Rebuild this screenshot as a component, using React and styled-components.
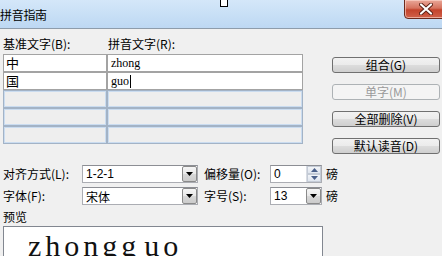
import React from "react";
import styled, { createGlobalStyle } from "styled-components";

const Global = createGlobalStyle`
  html, body { margin: 0; padding: 0; background: #f0f0f0; }
  * { box-sizing: border-box; }
`;

const CJK = `"Noto Sans CJK SC", "Noto Sans", sans-serif`;

const Window = styled.div`
  position: relative;
  width: 442px;
  height: 256px;
  overflow: hidden;
  background: #f0f0f0;
  font-family: ${CJK};
  font-size: 12px;
  color: #000;
`;

const TitleBar = styled.div`
  height: 29px;
  display: flex;
  align-items: flex-start;
  justify-content: space-between;
  background: linear-gradient(#d4e7f9, #bdd8f3);
  border-bottom: 1px solid #8e9cab;
`;

const Title = styled.div`
  line-height: 14px;
  padding-top: 8px;
  font-size: 12px;
  letter-spacing: -0.3px;
`;

const Grip = styled.div`
  position: absolute;
  left: 220px;
  top: -1px;
  width: 8px;
  height: 8px;
  background: #fff;
  border: 1px solid #000;
`;

const CloseBtn = styled.div`
  width: 43px;
  height: 20px;
  margin-right: -5px;
  margin-top: -1px;
  display: flex;
  align-items: center;
  justify-content: center;
  border: 1px solid #6b2a1e;
  border-radius: 0 0 4px 4px;
  background: linear-gradient(#e9a899 0%, #d6735f 45%, #c3432c 55%, #d0614a 100%);
  box-shadow: inset 0 0 0 1px rgba(255, 220, 210, 0.6);
`;

const Body = styled.div`
  padding-left: 3px;
`;

const Top = styled.div`
  display: flex;
  align-items: flex-start;
`;

const LeftCol = styled.div`
  width: 300px;
`;

const HeaderRow = styled.div`
  display: flex;
  padding-top: 8px;
  height: 25px;
  line-height: 14px;
`;

const ColLabel = styled.div`
  width: ${(p) => p.$w || "auto"};
  white-space: nowrap;
`;

const Grid = styled.div`
  display: grid;
  grid-template-columns: 104px 196px;
  grid-auto-rows: 18px;
`;

const Cell = styled.div`
  border: 1px solid ${(p) => (p.$empty ? "#a3b3c6" : "#a3a3a3")};
  background: ${(p) => (p.$empty ? "#eeeeee" : "#fff")};
  box-shadow: ${(p) => (p.$empty ? "inset 0 0 0 1px #cadcf0" : "none")};
  padding-left: ${(p) => (p.$latin ? "3px" : "2px")};
  display: flex;
  align-items: center;
  font-family: ${(p) => (p.$latin ? `"Liberation Serif", serif` : CJK)};
  font-size: ${(p) => (p.$latin ? "12px" : "13px")};
  line-height: 16px;
`;

const Caret = styled.span`
  display: inline-block;
  width: 1px;
  height: 13px;
  background: #000;
  margin-left: 1px;
`;

const Buttons = styled.div`
  margin-left: 29px;
  padding-top: 28px;
  display: flex;
  flex-direction: column;
  gap: 11px;
`;

const Button = styled.div`
  width: 108px;
  height: 16px;
  display: flex;
  align-items: center;
  justify-content: center;
  border: 1px solid ${(p) => (p.$disabled ? "#adb2b5" : "#707070")};
  border-radius: 3px;
  background: ${(p) =>
    p.$disabled
      ? "#f4f4f4"
      : "linear-gradient(#f2f2f2 0%, #ebebeb 50%, #dddddd 50%, #cfcfcf 100%)"};
  color: ${(p) => (p.$disabled ? "#9a9a9a" : "#000")};
  font-size: 12px;
  line-height: 14px;
  white-space: nowrap;
`;

const Form = styled.div`
  display: grid;
  grid-template-columns: 79px 116px 72px 52px auto;
  grid-auto-rows: 18px;
  row-gap: 4px;
  margin-top: 11px;
  align-items: center;
`;

const Label = styled.div`
  white-space: nowrap;
  line-height: 14px;
  padding-left: ${(p) => p.$pad || "0"};
`;

const Unit = styled.div`
  padding-left: 4px;
  line-height: 14px;
`;

const Field = styled.div`
  height: 18px;
  display: flex;
  align-items: stretch;
  justify-content: space-between;
  background: #fff;
  border: 1px solid #abadb3;
  border-top-color: #8c8e94;
`;

const FieldText = styled.span`
  padding-left: 3px;
  display: flex;
  align-items: center;
  font-family: ${(p) => (p.$cjk ? CJK : `"Liberation Sans", sans-serif`)};
  font-size: 12px;
`;

const DropBtn = styled.div`
  width: 15px;
  display: flex;
  align-items: center;
  justify-content: center;
  border: 1px solid #8a8a8a;
  border-radius: 2px;
  background: linear-gradient(#f5f5f5 0%, #e8e8e8 50%, #d8d8d8 51%, #cbcbcb 100%);
`;

const Spin = styled.div`
  width: 15px;
  display: flex;
  flex-direction: column;
  border-left: 1px solid #d8dce3;
`;

const SpinHalf = styled.div`
  flex: 1;
  display: flex;
  align-items: center;
  justify-content: center;
  background: linear-gradient(#f3f5f8, #dfe5ee);
  border: 1px solid #c4cbd6;
`;

const PreviewLabel = styled.div`
  margin-top: 5px;
  line-height: 14px;
  height: 16px;
`;

const Preview = styled.div`
  width: 320px;
  height: 40px;
  background: #fff;
  border: 1px solid #828790;
  padding: 2px 0 0 24px;
  font-family: "Liberation Serif", "Times New Roman", serif;
  font-size: 30px;
  line-height: 34px;
  white-space: nowrap;
  color: #111;
`;

const Pinyin = styled.span`
  letter-spacing: ${(p) => p.$ls};
  margin-right: ${(p) => p.$mr || "0"};
`;

const Down = ({ color = "#000" }) => (
  <svg width="7" height="4" viewBox="0 0 7 4">
    <path d="M0 0h7L3.5 4z" fill={color} />
  </svg>
);
const Up = ({ color = "#000" }) => (
  <svg width="7" height="4" viewBox="0 0 7 4">
    <path d="M0 4h7L3.5 0z" fill={color} />
  </svg>
);

export default function App() {
  return (
    <>
      <Global />
      <Window>
        <TitleBar>
          <Title>拼音指南</Title>
          <CloseBtn>
            <svg width="14" height="12" viewBox="0 0 14 12">
              <path
                d="M2 1.5 L12 10.5 M12 1.5 L2 10.5"
                stroke="#5a1f14"
                strokeWidth="4"
                strokeLinecap="round"
              />
              <path
                d="M2 1.5 L12 10.5 M12 1.5 L2 10.5"
                stroke="#fff"
                strokeWidth="2.2"
                strokeLinecap="round"
              />
            </svg>
          </CloseBtn>
        </TitleBar>
        <Grip />
        <Body>
          <Top>
            <LeftCol>
              <HeaderRow>
                <ColLabel $w="105px">基准文字(B):</ColLabel>
                <ColLabel>拼音文字(R):</ColLabel>
              </HeaderRow>
              <Grid>
                <Cell>中</Cell>
                <Cell $latin>zhong</Cell>
                <Cell>国</Cell>
                <Cell $latin>
                  guo
                  <Caret />
                </Cell>
                <Cell $empty />
                <Cell $empty />
                <Cell $empty />
                <Cell $empty />
                <Cell $empty />
                <Cell $empty />
              </Grid>
            </LeftCol>
            <Buttons>
              <Button>组合(G)</Button>
              <Button $disabled>单字(M)</Button>
              <Button>全部删除(V)</Button>
              <Button>默认读音(D)</Button>
            </Buttons>
          </Top>
          <Form>
            <Label>对齐方式(L):</Label>
            <Field>
              <FieldText>1-2-1</FieldText>
              <DropBtn>
                <Down />
              </DropBtn>
            </Field>
            <Label $pad="6px">偏移量(O):</Label>
            <Field>
              <FieldText>0</FieldText>
              <Spin>
                <SpinHalf>
                  <Up color="#4b6089" />
                </SpinHalf>
                <SpinHalf>
                  <Down color="#4b6089" />
                </SpinHalf>
              </Spin>
            </Field>
            <Unit>磅</Unit>

            <Label>字体(F):</Label>
            <Field>
              <FieldText $cjk>宋体</FieldText>
              <DropBtn>
                <Down />
              </DropBtn>
            </Field>
            <Label $pad="6px">字号(S):</Label>
            <Field>
              <FieldText>13</FieldText>
              <DropBtn>
                <Down />
              </DropBtn>
            </Field>
            <Unit>磅</Unit>
          </Form>
          <PreviewLabel>预览</PreviewLabel>
          <Preview>
            <Pinyin $ls="4px" $mr="4px">zhongg</Pinyin>
            <Pinyin $ls="4px">uo</Pinyin>
          </Preview>
        </Body>
      </Window>
    </>
  );
}
